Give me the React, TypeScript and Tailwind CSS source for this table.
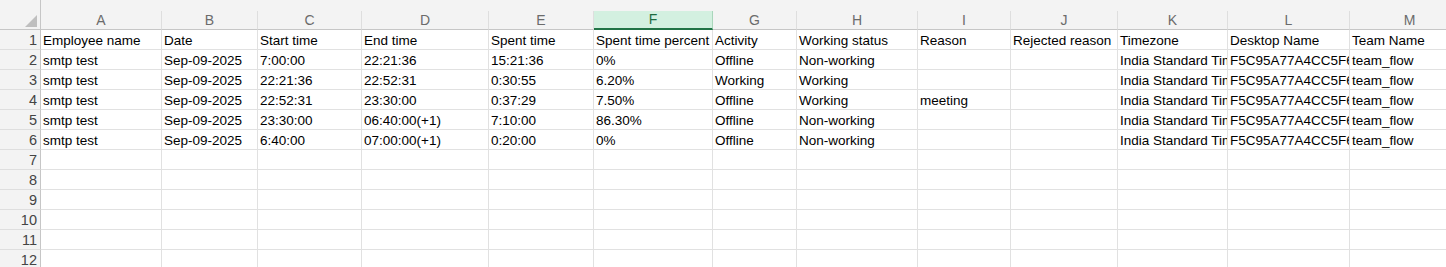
import React from 'react';

const cols: { key: string; w: string }[] = [
  { key: 'A', w: 'w-[121px]' },
  { key: 'B', w: 'w-[96px]' },
  { key: 'C', w: 'w-[104px]' },
  { key: 'D', w: 'w-[127px]' },
  { key: 'E', w: 'w-[105px]' },
  { key: 'F', w: 'w-[119px]' },
  { key: 'G', w: 'w-[84px]' },
  { key: 'H', w: 'w-[121px]' },
  { key: 'I', w: 'w-[93px]' },
  { key: 'J', w: 'w-[107px]' },
  { key: 'K', w: 'w-[110px]' },
  { key: 'L', w: 'w-[122px]' },
  { key: 'M', w: 'w-[120px]' },
];

const rows: string[][] = [
  ['Employee name', 'Date', 'Start time', 'End time', 'Spent time', 'Spent time percent', 'Activity', 'Working status', 'Reason', 'Rejected reason', 'Timezone', 'Desktop Name', 'Team Name'],
  ['smtp test', 'Sep-09-2025', '7:00:00', '22:21:36', '15:21:36', '0%', 'Offline', 'Non-working', '', '', 'India Standard Time', 'F5C95A77A4CC5F65', 'team_flow'],
  ['smtp test', 'Sep-09-2025', '22:21:36', '22:52:31', '0:30:55', '6.20%', 'Working', 'Working', '', '', 'India Standard Time', 'F5C95A77A4CC5F65', 'team_flow'],
  ['smtp test', 'Sep-09-2025', '22:52:31', '23:30:00', '0:37:29', '7.50%', 'Offline', 'Working', 'meeting', '', 'India Standard Time', 'F5C95A77A4CC5F65', 'team_flow'],
  ['smtp test', 'Sep-09-2025', '23:30:00', '06:40:00(+1)', '7:10:00', '86.30%', 'Offline', 'Non-working', '', '', 'India Standard Time', 'F5C95A77A4CC5F65', 'team_flow'],
  ['smtp test', 'Sep-09-2025', '6:40:00', '07:00:00(+1)', '0:20:00', '0%', 'Offline', 'Non-working', '', '', 'India Standard Time', 'F5C95A77A4CC5F65', 'team_flow'],
];

const font = { fontFamily: '"Liberation Sans", Arial, sans-serif' };

export default function App() {
  const all = Array.from({ length: 12 }, (_, i) => rows[i] ?? []);
  return (
    <div className="h-[267px] w-[1446px] overflow-hidden bg-white text-[13.5px]" style={font}>
      {/* strip above the column letters */}
      <div className="flex h-[11px] bg-[#f3f3f3]">
        <div className="h-full w-[41px] flex-none border-r border-[#c6c6c6]" />
      </div>

      {/* column letters */}
      <div className="flex h-[19px] bg-[#f3f3f3]">
        <div className="relative h-[19px] w-[41px] flex-none border-r border-b border-[#c6c6c6]">
          <svg className="absolute top-[4px] left-[25px]" width="12" height="12" viewBox="0 0 12 12">
            <polygon points="12,0 12,12 0,12" fill="#bfbfbf" />
          </svg>
        </div>
        {cols.map(c =>
          c.key === 'F' ? (
            <div
              key={c.key}
              className={`${c.w} flex h-[19px] flex-none items-center justify-center border-r border-b-2 border-r-[#a9d6bb] border-b-[#217346] bg-[#d3f0e0] text-[14px] leading-[17px] text-[#1d6b3f]`}
            >
              {c.key}
            </div>
          ) : (
            <div
              key={c.key}
              className={`${c.w} flex h-[19px] flex-none items-center justify-center border-r border-b border-r-[#dedede] border-b-[#c6c6c6] text-[14px] leading-[18px] text-[#6b6b6b]`}
            >
              {c.key}
            </div>
          ),
        )}
      </div>

      {/* data rows */}
      {all.map((r, i) => (
        <div key={i} className="flex h-[20px]">
          <div className="h-[20px] w-[41px] flex-none border-r border-b border-r-[#c6c6c6] border-b-[#dedede] bg-[#f3f3f3] pr-[3px] text-right text-[14.5px] leading-[20px] text-[#444]">
            {i + 1}
          </div>
          {cols.map((c, j) => (
            <div
              key={c.key}
              className={`${c.w} h-[20px] flex-none overflow-hidden border-r border-b border-[#e1e1e1] pl-[2px] leading-[21px] whitespace-nowrap text-black`}
            >
              {r[j] ?? ''}
            </div>
          ))}
        </div>
      ))}
    </div>
  );
}
